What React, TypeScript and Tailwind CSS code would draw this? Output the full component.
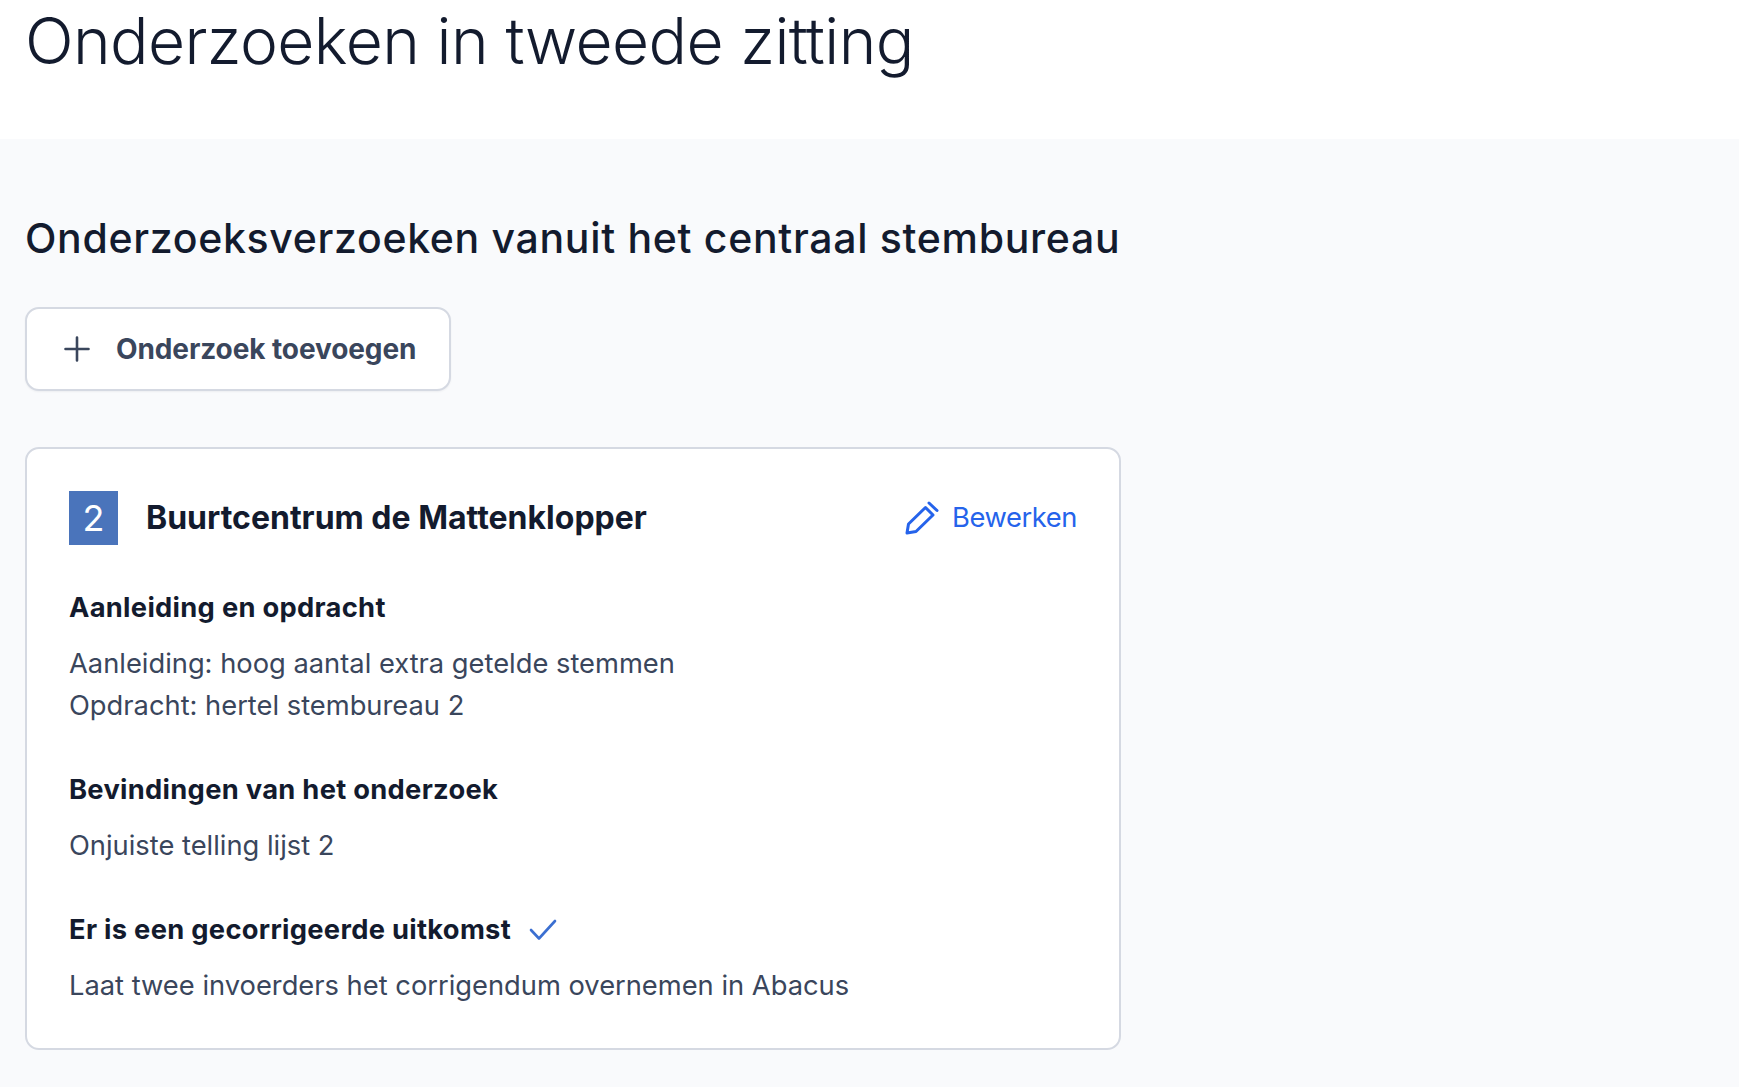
import React from "react";

const heading = "font-['Inter',sans-serif]";

function Block({ title, children, icon }: { title: string; children: React.ReactNode; icon?: React.ReactNode }) {
  return (
    <section className="mt-[42px] first:mt-[36px]">
      <h3 className="flex items-center gap-[18px] text-[27.3px] leading-[42px] font-bold tracking-[0.3px] text-[#131b2e]">
        {title}
        {icon}
      </h3>
      <div className="mt-[14px] text-[27.3px] leading-[42px] text-[#3a465c]">{children}</div>
    </section>
  );
}

export default function App() {
  return (
    <div className="min-h-screen bg-[#f9fafc] font-['Inter',sans-serif]">
      <header className="h-[139px] bg-white pl-[25px] pt-[1px]">
        <h1 className={`${heading} text-[64px] leading-[80px] font-[350] tracking-[-0.6px] text-[#131b2e]`}>Onderzoeken in tweede zitting</h1>
      </header>
      <main className="w-[1121px] pl-[25px] pt-[73px]">
        <h2 className={`${heading} whitespace-nowrap text-[41px] leading-[52px] font-medium tracking-[0.68px] text-[#131b2e]`}>Onderzoeksverzoeken vanuit het centraal stembureau</h2>
        <button className="mt-[43px] flex h-[84px] w-[426px] items-center rounded-[14px] border-2 border-[#d5d9e2] bg-white pl-[37px] text-[28px] font-bold tracking-[-0.1px] text-[#3a465c] shadow-[0_1px_2px_rgba(16,24,40,0.05)]">
          <svg width="26" height="26" viewBox="0 0 26 26" fill="none" stroke="#3a465c" strokeWidth="2.6" strokeLinecap="round">
            <path d="M13 1.5V24.5M1.5 13H24.5" />
          </svg>
          <span className="ml-[26px]">Onderzoek toevoegen</span>
        </button>
        <article className="mt-[56px] h-[603px] rounded-[14px] border-2 border-[#d5d9e2] bg-white px-[42px] pt-[42px]">
          <div className="flex h-[54px] items-center justify-between">
            <div className="flex items-center">
              <span className={`${heading} flex h-[54px] w-[49px] items-center justify-center bg-[#4a74bb] text-[36px] font-normal text-white`}>2</span>
              <span className="ml-[28px] text-[32px] font-bold text-[#131b2e]">Buurtcentrum de Mattenklopper</span>
            </div>
            <a className="flex items-center text-[27.3px] tracking-[-0.4px] text-[#2563eb]">
              <svg width="34" height="34" viewBox="0 0 34 34" fill="none" stroke="#2563eb" strokeWidth="3" strokeLinejoin="round" strokeLinecap="round">
                <path d="M2 32 L3.5 23 L20.5 6.5 L28 14 L11 30.5 Z" />
                <path d="M24 2 L32 9.5" />
              </svg>
              <span className="ml-[13px]">Bewerken</span>
            </a>
          </div>
          <Block title="Aanleiding en opdracht">
            <p>Aanleiding: hoog aantal extra getelde stemmen</p>
            <p>Opdracht: hertel stembureau 2</p>
          </Block>
          <Block title="Bevindingen van het onderzoek">
            <p>Onjuiste telling lijst 2</p>
          </Block>
          <Block
            title="Er is een gecorrigeerde uitkomst"
            icon={
              <svg width="28" height="22" viewBox="0 0 28 22" fill="none" stroke="#3b6fd1" strokeWidth="2.6" strokeLinecap="round" strokeLinejoin="round">
                <path d="M2 11 L10 19.5 L26 2" />
              </svg>
            }
          >
            <p>Laat twee invoerders het corrigendum overnemen in Abacus</p>
          </Block>
        </article>
      </main>
    </div>
  );
}
